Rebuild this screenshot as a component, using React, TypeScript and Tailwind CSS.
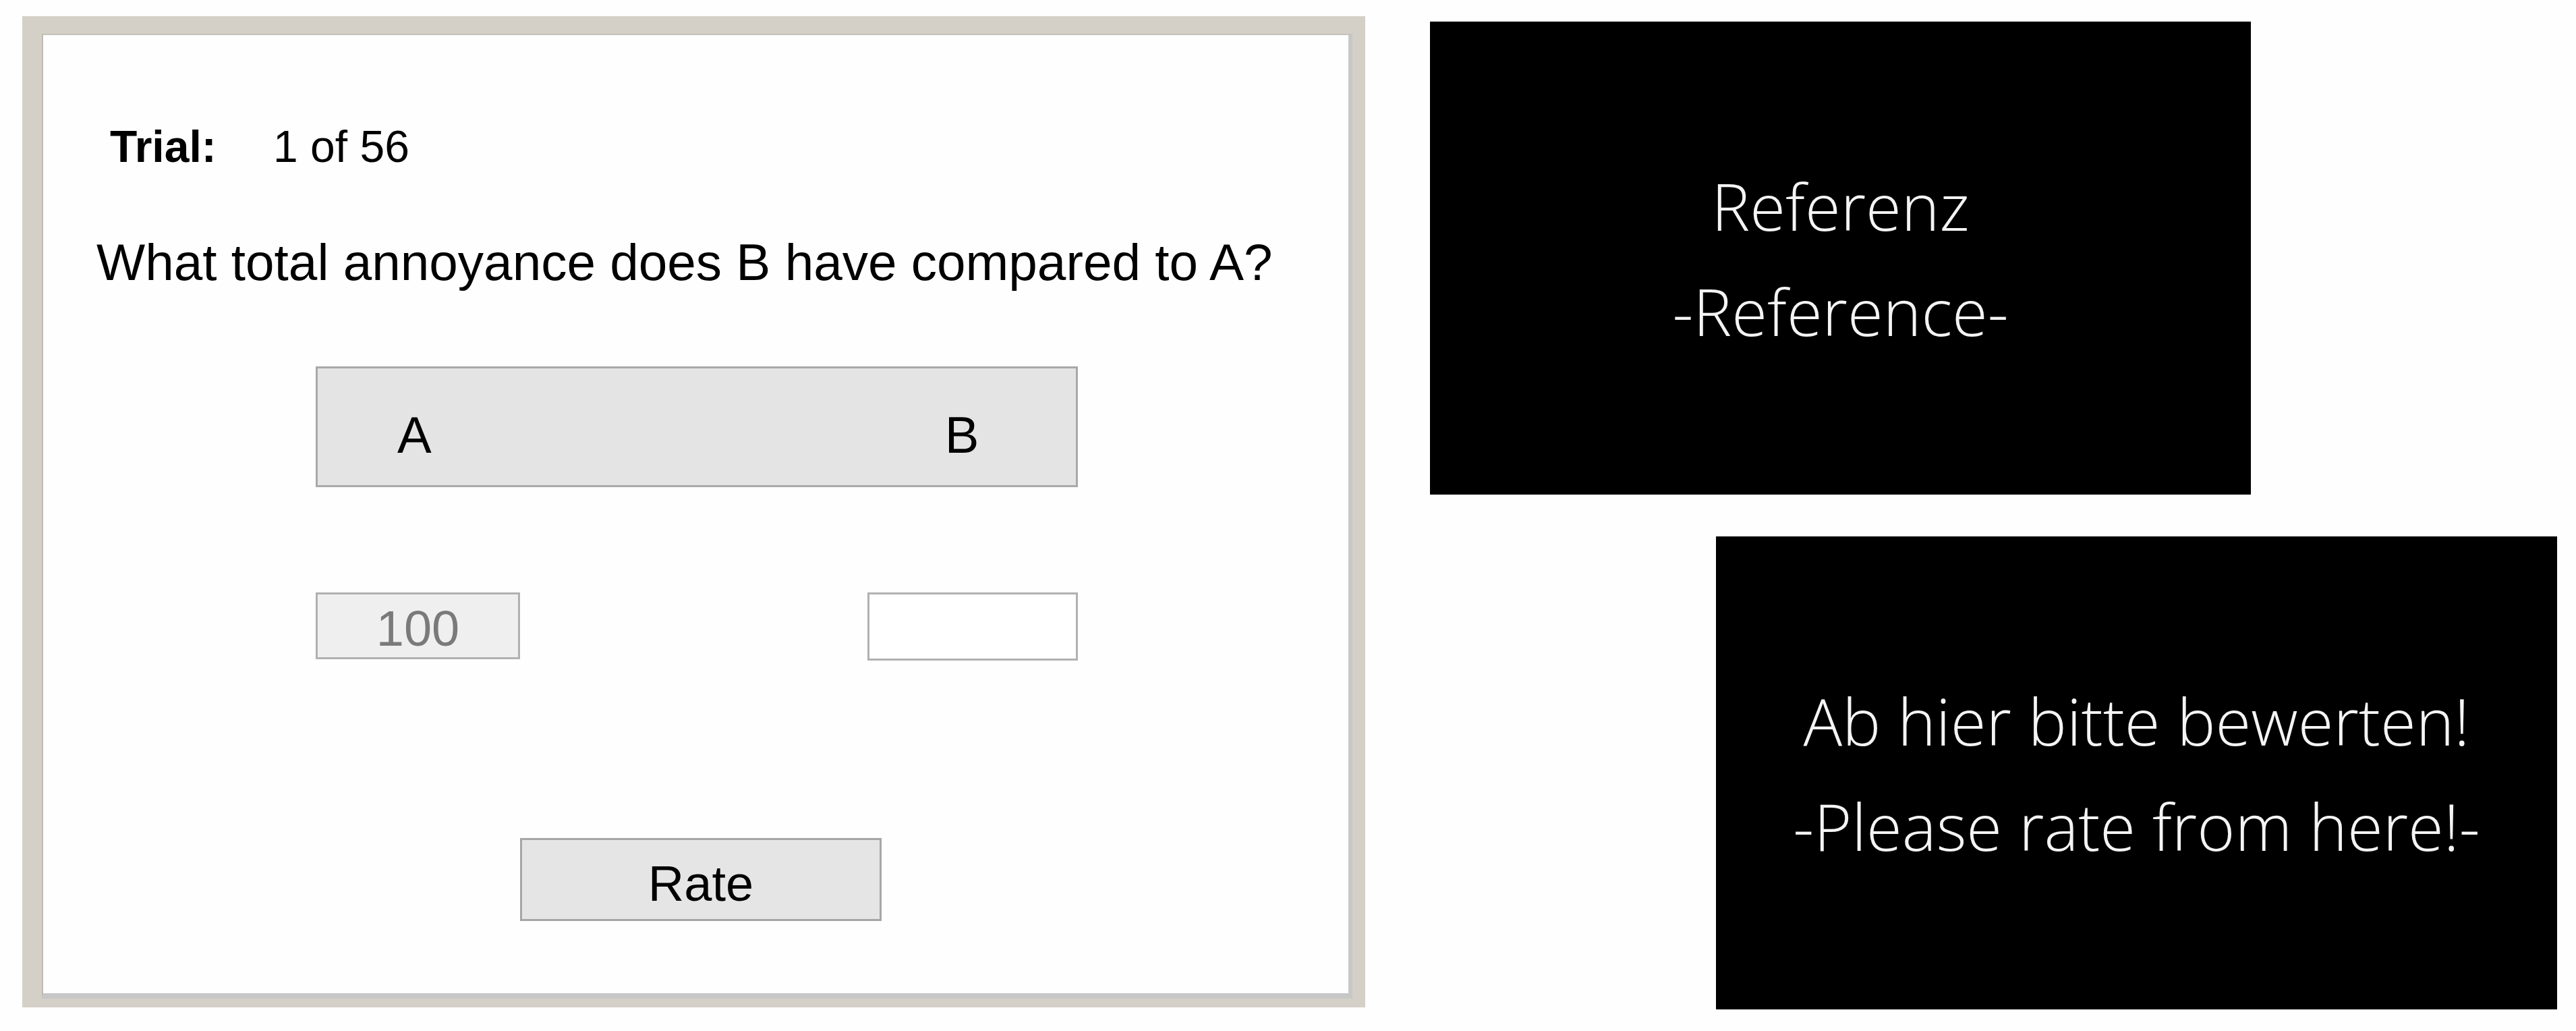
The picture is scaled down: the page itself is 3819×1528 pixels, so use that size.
const arial = { fontFamily: '"Liberation Sans", Arial, sans-serif' };

const TrialPanel = () => {
  return (
    <div className="w-[1991px] h-[1469px] bg-[#d4d0c8] pl-[29px] pt-[26px] pr-[19px] pb-[13px]">
      <div
        className="w-full h-full bg-[#fefefe] border-l-2 border-t-2 border-l-[#bdbab3] border-t-[#c4c1ba] border-r-[6px] border-b-[8px] border-r-[#c7c7c7] border-b-[#c7c7c7] flex flex-col text-black"
        style={arial}
      >
        <div className="mt-[133px] pl-[99px] flex text-[66px] leading-[65px]">
          <span className="w-[242px] font-bold">Trial:</span>
          <span>1 of 56</span>
        </div>

        <p className="mt-[101px] pl-[79px] text-[76.5px] leading-[76px] whitespace-nowrap">
          What total annoyance does B have compared to A?
        </p>

        <div className="mt-[116px] ml-[404px] w-[1130px] h-[179px] bg-[#e5e4e5] border-[3px] border-[#a9a9a9] flex items-start pt-[61px] text-[76px] leading-[76px]">
          <span className="ml-[118px]">A</span>
          <span className="ml-[761px]">B</span>
        </div>

        <div className="mt-[156px] ml-[404px] flex items-start">
          <div className="w-[303px] h-[99px] bg-[#efefef] border-[3px] border-[#b1b1b1] flex justify-center pt-[14px] text-[74px] leading-[74px] text-[#7a7a7a]">
            100
          </div>
          <div className="ml-[515px] w-[312px] h-[101px] bg-white border-[3px] border-[#b1b1b1]" />
        </div>

        <button className="mt-[263px] ml-[707px] w-[536px] h-[123px] bg-[#e6e5e6] border-[3px] border-[#a6a6a6] flex justify-center items-start pt-[28px] text-[74px] leading-[74px] text-black">
          Rate
        </button>
      </div>
    </div>
  );
};

const InfoSlide = ({ lines, className }: { lines: string[]; className: string }) => {
  return (
    <div
      className={`bg-black flex flex-col items-center justify-center text-[#f4f4f4] font-light text-[96px] leading-[156px] ${className}`}
      style={{ fontFamily: '"Open Sans", "Noto Sans", sans-serif' }}
    >
      {lines.map((l) => (
        <span key={l} className="whitespace-nowrap">
          {l}
        </span>
      ))}
    </div>
  );
};

export default function App() {
  return (
    <div className="w-[3819px] h-[1528px] bg-[#fefefe] flex items-start pl-[33px] pt-[24px] overflow-hidden">
      <TrialPanel />
      <div className="ml-[96px] pt-[8px] flex flex-col">
        <InfoSlide lines={["Referenz", "-Reference-"]} className="w-[1217px] h-[701px]" />
        <InfoSlide
          lines={["Ab hier bitte bewerten!", "-Please rate from here!-"]}
          className="mt-[62px] ml-[424px] w-[1247px] h-[701px]"
        />
      </div>
    </div>
  );
}
